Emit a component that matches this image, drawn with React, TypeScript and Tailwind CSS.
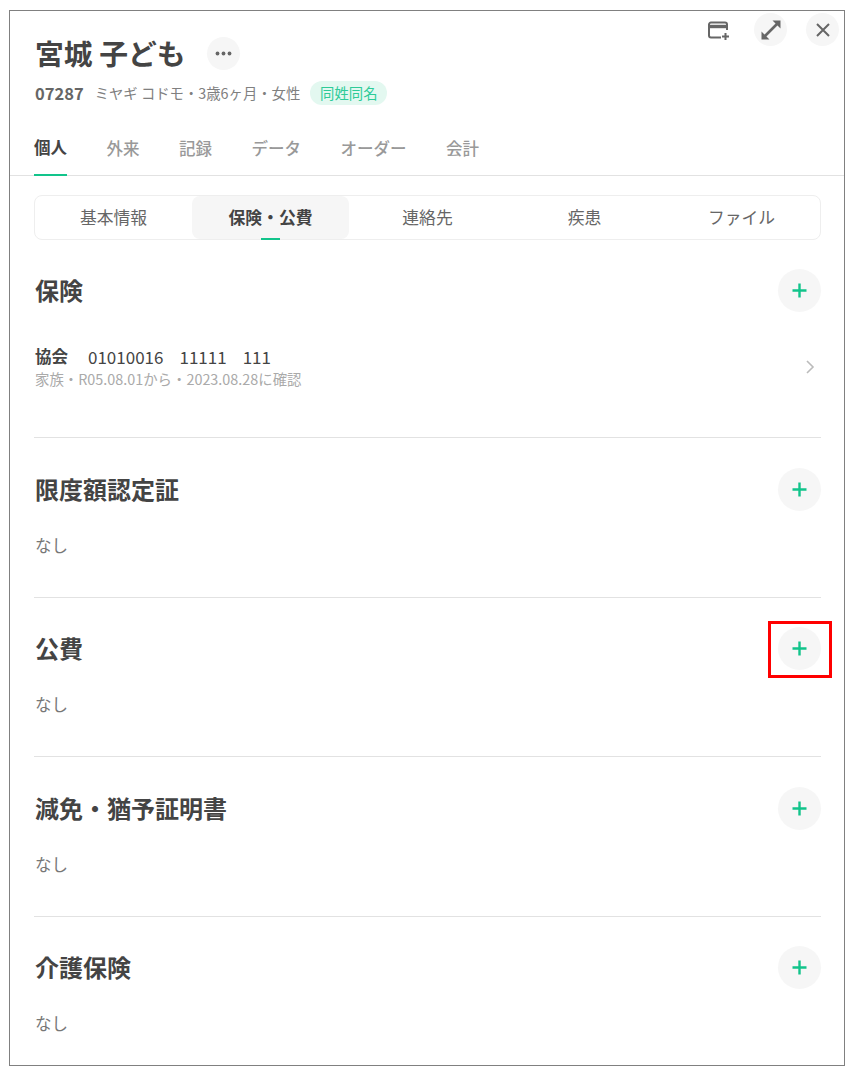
const font = "[font-family:'Noto_Sans_CJK_JP','Noto_Sans',sans-serif]"

const mainTabs = ["個人", "外来", "記録", "データ", "オーダー", "会計"]
const subTabs = ["基本情報", "保険・公費", "連絡先", "疾患", "ファイル"]

function PlusButton() {
  return (
    <button className="flex h-[43px] w-[43px] shrink-0 items-center justify-center rounded-full bg-[#f6f6f6]">
      <svg width="15" height="15" viewBox="0 0 15 15">
        <path d="M7.5 .5v14M.5 7.5h14" stroke="#12c48b" strokeWidth="2.4" fill="none" />
      </svg>
    </button>
  )
}

function Section({ title, className, children }: { title: string; className: string; children: React.ReactNode }) {
  return (
    <section className={className}>
      <div className="flex h-[43px] items-center justify-between pl-px">
        <h2 className="pb-[2px] text-[24px] leading-none font-bold text-[#444]">{title}</h2>
        <PlusButton />
      </div>
      {children}
    </section>
  )
}

function None() {
  return <div className="mt-[24px] pl-px text-[16.5px] leading-[20px] text-[#777]">なし</div>
}

export default function App() {
  return (
    <div className={`min-h-[1072px] bg-white pt-[10px] pl-[9px] ${font}`}>
      <div className="relative h-[1056px] w-[836px] overflow-hidden border border-[#808080]">
        {/* top right icons */}
        <div className="absolute top-[2px] right-[5px] flex items-center">
          <svg width="24" height="24" viewBox="0 0 24 24" className="mr-[23px]" fill="none" stroke="#666">
            <path d="M20 11V5.5a2 2 0 0 0-2-2H4a2 2 0 0 0-2 2v11a2 2 0 0 0 2 2h10" strokeWidth="2" transform="translate(0 1)" />
            <path d="M2.5 8.5h17" strokeWidth="3.4" />
            <path d="M18.5 15v7M15 18.5h7" strokeWidth="2" />
          </svg>
          <div className="mr-[19px] flex h-[33px] w-[33px] items-center justify-center rounded-full bg-[#f6f6f6]">
            <svg width="22" height="22" viewBox="0 0 22 22" fill="#666">
              <path d="M1.5 12.5v8h8z M20.5 1.5h-8l8 8z" />
              <path d="M5 17L17 5" stroke="#666" strokeWidth="2.6" />
            </svg>
          </div>
          <div className="flex h-[33px] w-[33px] items-center justify-center rounded-full bg-[#f6f6f6]">
            <svg width="16" height="16" viewBox="0 0 16 16" fill="none" stroke="#666" strokeWidth="2">
              <path d="M2 2l12 12M14 2L2 14" />
            </svg>
          </div>
        </div>

        {/* patient header */}
        <div className="px-[24px] pt-[24px]">
          <div className="flex h-[36px] items-center">
            <h1 className="pl-px text-[28.8px] leading-none font-bold text-[#444]">宮城 子ども</h1>
            <button className="ml-[21px] flex h-[33px] w-[33px] items-center justify-center rounded-full bg-[#f6f6f6]">
              <svg width="17" height="5" viewBox="0 0 17 5" fill="#666">
                <circle cx="2.5" cy="2.5" r="1.9" />
                <circle cx="8.5" cy="2.5" r="1.9" />
                <circle cx="14.5" cy="2.5" r="1.9" />
              </svg>
            </button>
          </div>
          <div className="mt-[10px] flex h-[24px] items-center pl-px">
            <span className="text-[16.5px] leading-none font-bold text-[#666]">07287</span>
            <span className="ml-[11px] text-[14.35px] leading-none text-[#808080]">ミヤギ コドモ・3歳6ヶ月・女性</span>
            <span className="ml-[10px] flex h-[24px] w-[77px] items-center justify-center rounded-full bg-[#e3f8f0] text-[14.35px] leading-none text-[#2ecb98]">
              同姓同名
            </span>
          </div>
        </div>

        {/* main tabs */}
        <nav className="mt-[16px] flex h-[55px] gap-[39.5px] border-b border-[#e2e2e2] px-[24px]">
          {mainTabs.map((tab, i) => (
            <div
              key={tab}
              className={`flex h-[55px] items-center text-[16.5px] leading-none ${
                i === 0 ? "border-b-2 border-[#12c48b] font-bold text-[#444]" : "font-medium text-[#999]"
              }`}
            >
              {tab}
            </div>
          ))}
        </nav>

        {/* sub tabs */}
        <div className="mr-[23px] ml-[24px] mt-[19px] grid h-[45px] grid-cols-5 rounded-[8px] border border-[#eeeeee]">
          {subTabs.map((tab, i) => (
            <div
              key={tab}
              className={`relative flex items-center justify-center rounded-[8px] text-[16.8px] leading-none ${
                i === 1 ? "bg-[#f6f6f6] font-bold text-[#444]" : "text-[#666]"
              }`}
            >
              {tab}
              {i === 1 && <span className="absolute bottom-[-1px] left-[69px] h-[2px] w-[19px] bg-[#12c48b]" />}
            </div>
          ))}
        </div>

        {/* sections */}
        <div className="relative pt-[29px] pr-[23px] pl-[24px]">
          <Section title="保険" className="h-[169px] border-b border-[#e2e2e2]">
            <div className="mt-[34px] flex items-center justify-between pl-px">
              <div>
                <div className="flex h-[20px] items-center text-[17px] leading-none whitespace-pre text-[#444]">
                  <span className="text-[16.5px] font-bold">協会</span>
                  <span className="ml-[20px]">01010016</span>
                  <span className="ml-[16px]">11111</span>
                  <span className="ml-[16px]">111</span>
                </div>
                <div className="mt-[4px] text-[14.4px] leading-[18px] text-[#aaa]">家族・R05.08.01から・2023.08.28に確認</div>
              </div>
              <svg width="10" height="14" viewBox="0 0 10 14" fill="none" stroke="#bbb" strokeWidth="1.6" className="mr-[6px]">
                <path d="M2 1l6 6-6 6" />
              </svg>
            </div>
          </Section>
          <Section title="限度額認定証" className="mt-[30px] h-[130px] border-b border-[#e2e2e2]">
            <None />
          </Section>
          <Section title="公費" className="mt-[29px] h-[130px] border-b border-[#e2e2e2]">
            <None />
          </Section>
          <Section title="減免・猶予証明書" className="mt-[30px] h-[130px] border-b border-[#e2e2e2]">
            <None />
          </Section>
          <Section title="介護保険" className="mt-[29px]">
            <None />
          </Section>
        </div>

        {/* red highlight */}
        <div className="absolute top-[610px] left-[758px] h-[57px] w-[64px] border-[3px] border-[#ff0000]" />
      </div>
    </div>
  )
}
